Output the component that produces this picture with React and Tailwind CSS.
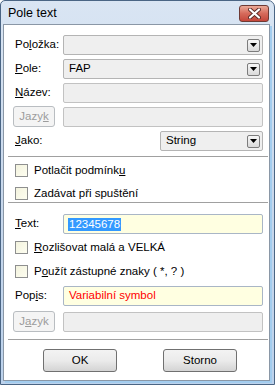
import React from "react";

function DropBtn() {
  return (
    <div className="ml-auto mr-[2px] w-[13px] h-[13px] rounded-[2px] border border-[#7c7c7c] bg-gradient-to-b from-[#f7f7f7] to-[#d9d9d9] flex items-center justify-center">
      <svg width="7" height="4" viewBox="0 0 7 4">
        <path d="M0 0h7L3.5 4z" fill="#000" />
      </svg>
    </div>
  );
}

function Combo({ text, className = "" }) {
  return (
    <div className={`h-[20px] rounded-[2px] border border-[#b4b4b4] bg-[#efefef] flex items-center pl-[5px] ${className}`}>
      <span className="text-[11.5px] leading-none text-black">{text}</span>
      <DropBtn />
    </div>
  );
}

function Input({ children, yellow, className = "" }) {
  return (
    <div
      className={`h-[20px] rounded-[2px] border flex items-center pl-[4px] ${
        yellow ? "bg-[#ffffe1] border-[#a9b6c6]" : "bg-[#efefef] border-[#c2c2c2]"
      } ${className}`}
    >
      {children}
    </div>
  );
}

function Label({ children }) {
  return <div className="w-[48px] ml-[11px] text-[11.5px] leading-none text-black">{children}</div>;
}

function JazykBtn({ children }) {
  return (
    <div className="ml-[9px] w-[42px] h-[21px] rounded-[3px] border border-[#b9bdc1] bg-[#f4f4f4] flex items-center justify-center text-[11.5px] leading-none text-[#9c9c9c]">
      {children}
    </div>
  );
}

function Check({ children, className = "" }) {
  return (
    <div className={`flex items-center ml-[11px] h-[13px] ${className}`}>
      <div className="w-[13px] h-[13px] border border-[#8e8f8f] bg-gradient-to-br from-[#f3f3de] to-[#fdfdf0]" />
      <span className="ml-[6px] text-[11.5px] leading-none text-black">{children}</span>
    </div>
  );
}

function Sep({ className = "" }) {
  return <div className={`ml-[4px] mr-[1px] h-px bg-[#a0a0a0] ${className}`} />;
}

function Btn({ children, className = "" }) {
  return (
    <div className={`w-[74px] h-[23px] rounded-[3px] border border-[#707070] bg-gradient-to-b from-[#f3f3f3] via-[#ebebeb] to-[#d4d4d4] flex items-center justify-center text-[11.5px] leading-none text-black ${className}`}>
      {children}
    </div>
  );
}

export default function App() {
  return (
    <div className="w-[275px] h-[385px] font-['Liberation_Sans',Arial,sans-serif] bg-white">
      <div className="w-[275px] h-[385px] rounded-tl-[5px] rounded-tr-[7px] border border-[#4a6584] bg-gradient-to-b from-[#d9e5f3] via-[#c8d8ec] to-[#bcd2ec] flex flex-col">
        {/* Title bar */}
        <div className="h-[23px] flex items-start">
          <div className="ml-[7px] mt-[6px] text-[12.5px] leading-none text-black">Pole text</div>
          <div className="ml-auto mr-[5px] mt-[4px] w-[30px] h-[17px] rounded-[3px] border border-[#6e3a34] bg-gradient-to-b from-[#eaa998] via-[#d66a5b] to-[#c4463a] flex items-center justify-center">
            <svg width="13" height="11" viewBox="0 0 13 11">
              <path d="M2 1.5L11 9.5M11 1.5L2 9.5" stroke="#5a2a26" strokeWidth="4" strokeLinecap="round" />
              <path d="M2 1.5L11 9.5M11 1.5L2 9.5" stroke="#ffffff" strokeWidth="2.2" strokeLinecap="round" />
            </svg>
          </div>
        </div>
        {/* Client */}
        <div className="ml-[2px] mr-[4px] mb-[3px] flex-1 border border-[#8a97a6] bg-white flex flex-col shadow-[2px_2px_0_0_#a3cdef]">
          <div className="flex items-center mt-[10px]">
            <Label>
              Po<u>l</u>ožka:
            </Label>
            <Combo className="flex-1 mr-[6px]" />
          </div>
          <div className="flex items-center mt-[4px]">
            <Label>
              <u>P</u>ole:
            </Label>
            <Combo text="FAP" className="flex-1 mr-[6px]" />
          </div>
          <div className="flex items-center mt-[4px]">
            <Label>
              <u>N</u>ázev:
            </Label>
            <Input className="flex-1 mr-[6px]" />
          </div>
          <div className="flex items-center mt-[3px]">
            <JazykBtn>
              Jazy<u>k</u>
            </JazykBtn>
            <Input className="flex-1 ml-[8px] mr-[6px]" />
          </div>
          <div className="flex items-center mt-[4px]">
            <Label>
              <u>J</u>ako:
            </Label>
            <Combo text="String" className="ml-auto w-[103px] mr-[6px]" />
          </div>
          <Sep className="mt-[5px]" />
          <Check className="mt-[7px]">
            Potlačit podmínk<u>u</u>
          </Check>
          <Check className="mt-[10px]">
            Zadávat při spuštění
          </Check>
          <Sep className="mt-[2px]" />
          <div className="flex items-center mt-[11px]">
            <Label>
              <u>T</u>ext:
            </Label>
            <Input yellow className="flex-1 mr-[6px]">
              <span className="text-[11.5px] leading-[13px] bg-[#3399ff] text-white px-px">12345678</span>
            </Input>
          </div>
          <Check className="mt-[7px]">
            <u>R</u>ozlišovat malá a VELKÁ
          </Check>
          <Check className="mt-[11px]">
            P<u>o</u>užít zástupné znaky ( *, ? )
          </Check>
          <div className="flex items-center mt-[8px]">
            <Label>
              Pop<u>i</u>s:
            </Label>
            <Input yellow className="flex-1 mr-[6px]">
              <span className="text-[11.5px] leading-none text-[#ff0000] pl-px">Variabilní symbol</span>
            </Input>
          </div>
          <div className="flex items-center mt-[5px]">
            <JazykBtn>
              J<u>a</u>zyk
            </JazykBtn>
            <Input className="flex-1 ml-[8px] mr-[6px]" />
          </div>
          <Sep className="mt-[7px]" />
          <div className="flex mt-[9px]">
            <Btn className="ml-[39px]">OK</Btn>
            <Btn className="ml-[46px]">Storno</Btn>
          </div>
        </div>
      </div>
    </div>
  );
}
